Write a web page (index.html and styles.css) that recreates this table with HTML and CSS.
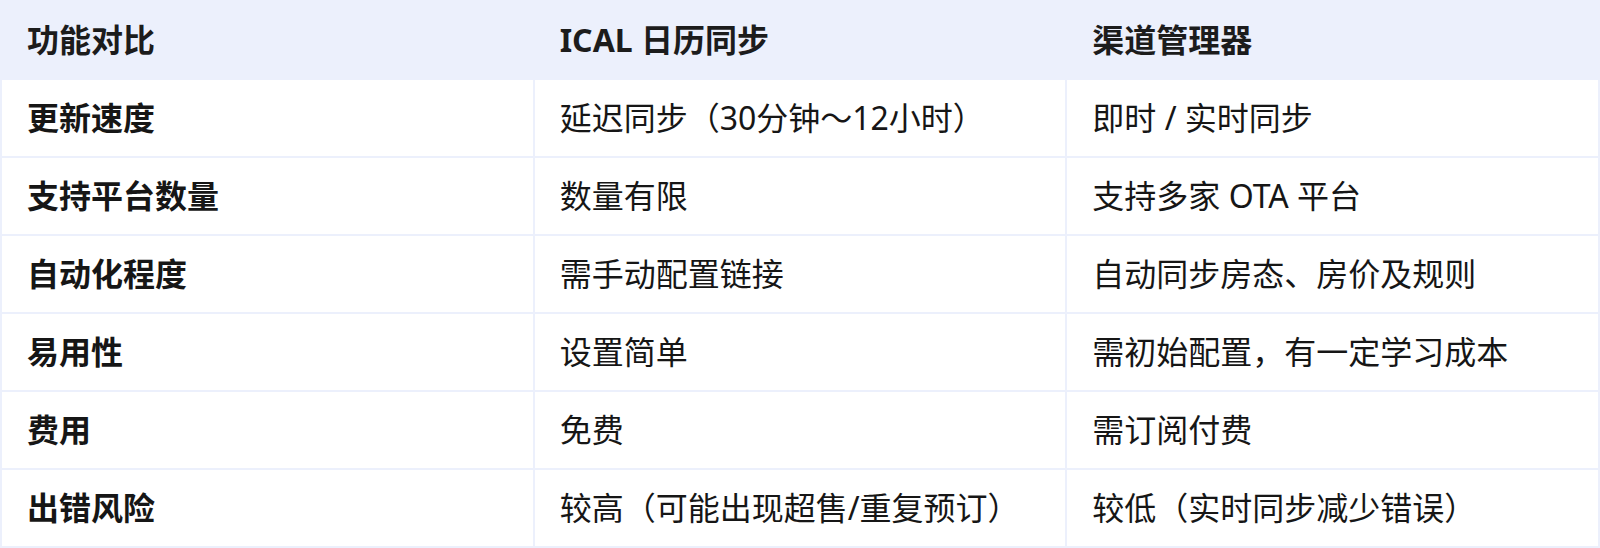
FILE: index.html
```html
<!DOCTYPE html>
<html lang="zh-CN">
<head>
<meta charset="utf-8">
<title>功能对比</title>
<link rel="stylesheet" href="styles.css">
</head>
<body>
<div class="compare" role="table">
  <div class="cell head" role="columnheader">功能对比</div>
  <div class="cell head" role="columnheader">ICAL 日历同步</div>
  <div class="cell head" role="columnheader">渠道管理器</div>

  <div class="cell label" role="rowheader">更新速度</div>
  <div class="cell" role="cell">延迟同步（30分钟～12小时）</div>
  <div class="cell" role="cell">即时 / 实时同步</div>

  <div class="cell label" role="rowheader">支持平台数量</div>
  <div class="cell" role="cell">数量有限</div>
  <div class="cell" role="cell">支持多家 OTA 平台</div>

  <div class="cell label" role="rowheader">自动化程度</div>
  <div class="cell" role="cell">需手动配置链接</div>
  <div class="cell" role="cell">自动同步房态、房价及规则</div>

  <div class="cell label" role="rowheader">易用性</div>
  <div class="cell" role="cell">设置简单</div>
  <div class="cell" role="cell">需初始配置，有一定学习成本</div>

  <div class="cell label" role="rowheader">费用</div>
  <div class="cell" role="cell">免费</div>
  <div class="cell" role="cell">需订阅付费</div>

  <div class="cell label" role="rowheader">出错风险</div>
  <div class="cell" role="cell">较高（可能出现超售/重复预订）</div>
  <div class="cell" role="cell">较低（实时同步减少错误）</div>
</div>
</body>
</html>
```

FILE: styles.css
```css
html, body {
  margin: 0;
  padding: 0;
  background: #ffffff;
}

body {
  font-family: "Noto Sans", "Noto Sans CJK SC", sans-serif;
  color: #161616;
}

.compare {
  width: 1600px;
  box-sizing: border-box;
  padding: 2px;
  display: grid;
  grid-template-columns: 1fr 1fr 1fr;
  grid-auto-rows: 76px;
  gap: 2px;
  background: #ecf0fc;
}

.cell {
  display: flex;
  align-items: center;
  padding: 0 25px;
  background: #ffffff;
  font-size: 32px;
  line-height: 1;
  white-space: nowrap;
}

.cell.head {
  background: #ecf0fc;
  font-weight: 700;
  color: #1c1c1c;
}

.cell.label {
  font-weight: 700;
}
```
